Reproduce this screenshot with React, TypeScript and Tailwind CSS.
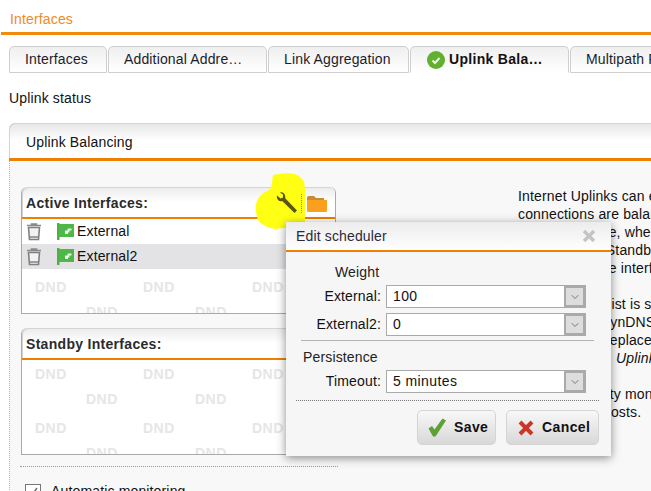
import React from 'react';
import { ChevronDown } from 'lucide-react';

const tabs = [
  { label: 'Interfaces', width: 'w-[98px]' },
  { label: 'Additional Addre…', width: 'w-[159px]' },
  { label: 'Link Aggregation', width: 'w-[141px]' },
  { label: 'Uplink Bala…', width: 'w-[159px]', active: true },
  { label: 'Multipath Routing', width: 'w-[159px]' },
];

const dndMarks = [
  { x: 13, y: 0 }, { x: 121, y: 0 }, { x: 230, y: 0 },
  { x: 64, y: 25 }, { x: 173, y: 25 }, { x: 281, y: 25 },
  { x: 13, y: 54 }, { x: 121, y: 54 }, { x: 230, y: 54 },
  { x: 64, y: 79 }, { x: 173, y: 79 }, { x: 281, y: 79 },
];

const helpText = [
  { text: 'Internet Uplinks can either be balanced', top: 'mt-0' },
  { text: 'connections are balanced between them', top: 'mt-0' },
  { text: 'in normal mode, when all of them', top: 'mt-0' },
  { text: 'uplinks in the Standby table', top: 'mt-0' },
  { text: 'once one of the interfaces fails.', top: 'mt-0' },
  { text: 'This interface list is shown', top: 'mt-[18px]' },
  { text: 'and used as DynDNS account', top: 'mt-0' },
  { text: 'to set up and replace the hosts', top: 'mt-0' },
];

const TrashIcon = () => (
  <svg width="16" height="18" viewBox="0 0 16 18" className="shrink-0">
    <path d="M1 2.5h14M5.5 2V1h5v1" stroke="#8a8a8a" strokeWidth="1.6" fill="none" />
    <path d="M2.5 4.5h11l-1 12h-9z" fill="#f2f2f2" stroke="#808080" strokeWidth="1.6" />
    <path d="M4 14h8" stroke="#8a8a8a" strokeWidth="1.6" />
  </svg>
);

const FlagIcon = () => (
  <svg width="17" height="17" viewBox="0 0 17 17" className="shrink-0">
    <rect x="0" y="0" width="2.5" height="17" fill="#4fae45" />
    <rect x="2" y="1" width="15" height="13" fill="#4fb648" />
    <path d="M8 8.5h3.5v-2h3M8 10h3" stroke="#e8f6e4" strokeWidth="1.8" fill="none" />
  </svg>
);

const Watermark = () => (
  <div className="absolute inset-0 overflow-hidden">
    {dndMarks.map((m) => (
      <span
        key={`${m.x}-${m.y}`}
        className="absolute text-[14px] leading-4 font-bold tracking-[0.5px] text-[#e6e6e6]"
        style={{ left: m.x, top: m.y }}
      >
        DND
      </span>
    ))}
  </div>
);

const SelectBox = ({ value }: { value: string }) => (
  <div className="flex h-[23px] w-[200px] border border-[#aaaaaa] bg-white">
    <span className="flex-1 pl-1.5 text-[14px] leading-[21px] tracking-[0.4px] text-[#111]">{value}</span>
    <span className="flex w-[21px] items-center justify-center border-2 border-[#aaaaaa] bg-[#dddddd]">
      <ChevronDown className="h-3 w-3 text-[#555]" strokeWidth={1.5} />
    </span>
  </div>
);

const BoxHeader = ({ title, children }: { title: string; children?: React.ReactNode }) => (
  <div className="flex h-[32px] items-center justify-between rounded-t-md border-b-2 border-[#ee7f00] bg-gradient-to-b from-[#ebebeb] via-white to-white pt-[2px] pl-[4px] shadow-[inset_1px_1px_0_#d4d4d4]">
    <span className="text-[14px] font-bold tracking-[0.3px] text-[#2b2b2b]">{title}</span>
    {children}
  </div>
);

export default function App() {
  return (
    <div className="relative h-[491px] w-[651px] overflow-hidden bg-white font-['Liberation_Sans',Arial,sans-serif] text-[14px] tracking-[0.15px] text-[#111]">
      <div className="ml-px flex h-[35px] items-end border-b-[3px] border-[#f28a0c] pb-[2px] pl-[9px] text-[14px] text-[#f5891b]">
        Interfaces
      </div>

      <div className="mt-[11px] ml-[9px] flex h-[27px] gap-px">
        {tabs.map((t) => (
          <div
            key={t.label}
            className={`${t.width} flex shrink-0 items-center gap-[4px] overflow-hidden rounded-t-[5px] border border-[#cfcfcf] bg-gradient-to-b from-[#efefef] to-white pl-[15px] whitespace-nowrap ${
              t.active ? 'border-b-white pl-[16px] font-bold tracking-[0.3px] text-[#111]' : 'text-[#1c1c2a]'
            }`}
          >
            {t.active && (
              <svg width="18" height="18" viewBox="0 0 18 18" className="shrink-0">
                <circle cx="9" cy="9" r="9" fill="#62b02f" />
                <path d="M5.5 9.5l2.500 2.500 4.500-5" stroke="#eef8e4" strokeWidth="2" fill="none" />
              </svg>
            )}
            {t.label}
          </div>
        ))}
      </div>

      <div className="mt-[17px] ml-[9px] leading-[16px] text-[#111]">Uplink status</div>

      <div className="mt-[17px] ml-[9px] rounded-tl-md bg-[#f8f8f8]">
        <div className="flex h-[38px] items-center rounded-tl-md border-b-[3px] border-[#ee7f00] bg-gradient-to-b from-[#e6e6e6] via-white to-white pt-[3px] pl-[17px] shadow-[inset_1px_1px_0_#d4d4d4]">
          Uplink Balancing
        </div>

        <div className="flex h-[331px] border-l border-dotted border-[#b5b5b5]">
          <div className="ml-[11px] w-[315px] shrink-0 pt-[26px]">
            <div className="h-[127px] rounded-t-md border-x border-b border-[#aaaaaa] bg-white">
              <BoxHeader title="Active Interfaces:">
                <span className="mr-[8px] flex items-center">
                  <svg width="22" height="22" viewBox="0 0 22 22" className="relative z-20">
                    <path
                      d="M1 3.500L4.500 6.500 7 5.500 7 2.500 4 0.500C7-0.300 10 2.500 9.200 6.200L21 18.500 18.500 21 6.200 9C3 10 0.200 7 1 3.500Z"
                      fill="#5a5510"
                    />
                  </svg>
                  <span className="relative z-20 mr-[5px] ml-[3px] h-[19px] border-l border-dotted border-[#8f8f30]" />
                  <svg width="20" height="17" viewBox="0 0 20 17">
                    <path d="M0 2.500Q0 1 1.500 1H7l2 2h8v2H0z" fill="#c98a34" />
                    <path d="M0 5h20v10.500a1.500 1.500 0 0 1-1.500 1.500h-17A1.500 1.500 0 0 1 0 15.500z" fill="#f9a01e" />
                  </svg>
                </span>
              </BoxHeader>
              <div className="relative h-[94px]">
                <div className="absolute top-[60px] right-0 bottom-0 left-0">
                  <Watermark />
                </div>
                <div className="relative">
                  {['External', 'External2'].map((name, i) => (
                    <div
                      key={name}
                      className={`flex h-[25px] items-center pl-[4px] ${i === 1 ? 'bg-[#e3e3e5]' : ''}`}
                    >
                      <TrashIcon />
                      <span className="ml-[15px]">
                        <FlagIcon />
                      </span>
                      <span className="ml-[3px] text-[#111]">{name}</span>
                    </div>
                  ))}
                </div>
              </div>
            </div>

            <div className="mt-[14px] h-[127px] rounded-t-md border-x border-b border-[#aaaaaa] bg-white">
              <BoxHeader title="Standby Interfaces:" />
              <div className="relative h-[94px]">
                <div className="absolute inset-x-0 top-[6px] bottom-0">
                  <Watermark />
                </div>
              </div>
            </div>

            <div className="mt-[11px] -ml-px w-[318px] border-t border-dotted border-[#9a9a9a]" />
            <div className="mt-[14px] flex items-center gap-[10px] pl-[4px]">
              <span className="flex h-[16px] w-[16px] items-center justify-center border border-[#777] bg-white">
                <svg width="12" height="12" viewBox="0 0 12 12">
                  <path d="M2 6l3 3 5-7" stroke="#666" strokeWidth="1.4" fill="none" />
                </svg>
              </span>
              Automatic monitoring
            </div>
          </div>

          <div className="ml-[182px] shrink-0 pt-[26px] leading-[18px] whitespace-nowrap text-[#111]">
            {helpText.map((l) => (
              <div key={l.text} className={l.top}>
                {l.text}
              </div>
            ))}
            <div className="pl-[98px] italic">Uplink Balancing</div>
            <div className="mt-[18px] pl-[59px]">activity monitoring</div>
            <div className="pl-[85px]">hosts.</div>
          </div>
        </div>
      </div>

      <svg width="52" height="58" viewBox="0 0 52 58" className="absolute top-[172px] left-[255px] z-10">
        <path
          d="M18 3Q30 0 40 2Q50 6 50 16L50 50Q48 54 40 55L20 57Q8 55 3 48Q0 40 1 32Q3 24 10 20Q17 18 17 10Z"
          fill="#ffff14"
        />
      </svg>

      <div className="absolute top-[222px] left-[286px] z-30 h-[234px] w-[325px] bg-[#f6f6f6] shadow-[0_2px_9px_rgba(0,0,0,0.45)]">
        <div className="flex h-[30px] items-center justify-between border-b-2 border-[#ee7f00] bg-gradient-to-b from-[#ececec] to-white pr-[15px] pl-[10px] text-[#2a2a3a]">
          Edit scheduler
          <svg width="14" height="14" viewBox="0 0 14 14">
            <path d="M2 2l10 10M12 2L2 12" stroke="#c4c4c4" strokeWidth="3.5" />
          </svg>
        </div>

        <div className="mt-[11px] pl-[49px] leading-[18px] text-[#222]">Weight</div>
        <div className="mt-[4px] flex items-center gap-[5px]">
          <span className="w-[95px] text-right">External:</span>
          <SelectBox value="100" />
        </div>
        <div className="mt-[5px] flex items-center gap-[5px]">
          <span className="w-[95px] text-right">External2:</span>
          <SelectBox value="0" />
        </div>
        <div className="mt-[4px] ml-[15px] w-[293px] border-t border-[#b4b4b4]" />
        <div className="mt-[7px] pl-[17px] leading-[18px] text-[#222]">Persistence</div>
        <div className="mt-[4px] flex items-center gap-[5px]">
          <span className="w-[95px] text-right">Timeout:</span>
          <SelectBox value="5 minutes" />
        </div>
        <div className="mt-[7px] ml-[10px] w-[303px] border-t border-dotted border-[#777]" />

        <div className="mt-[9px] mr-[12px] flex justify-end gap-[10px]">
          <button className="flex h-[35px] w-[79px] items-center gap-[8px] rounded-[5px] border border-[#d4d4d4] bg-gradient-to-b from-[#f8f8f8] to-[#d8d8d8] pl-[10px] font-bold tracking-[0.4px] text-[#111]">
            <svg width="18" height="19" viewBox="0 0 18 19" className="shrink-0">
              <path d="M0.500 10.500l3.500-2.500 2.500 3.500L14.500 0.500 18 2.500 7.500 18.500h-2.500z" fill="#5da134" />
            </svg>
            Save
          </button>
          <button className="flex h-[35px] w-[93px] items-center gap-[8px] rounded-[5px] border border-[#d4d4d4] bg-gradient-to-b from-[#f8f8f8] to-[#d8d8d8] pl-[11px] font-bold tracking-[0.4px] text-[#111]">
            <svg width="16" height="16" viewBox="0 0 16 16" className="shrink-0">
              <path d="M2 2l12 12M14 2L2 14" stroke="#c8372a" strokeWidth="4" />
            </svg>
            Cancel
          </button>
        </div>
      </div>
    </div>
  );
}
